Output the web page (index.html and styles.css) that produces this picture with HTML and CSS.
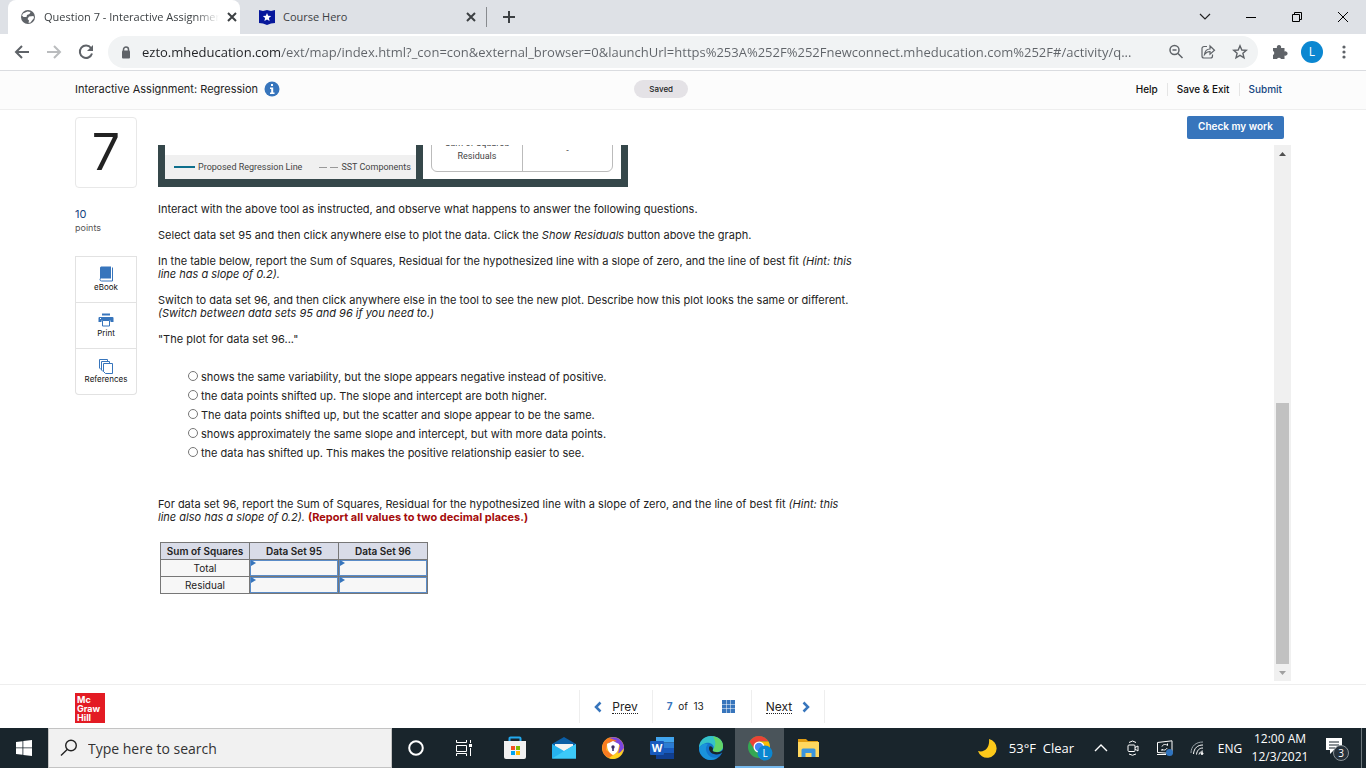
FILE: index.html
```
<!DOCTYPE html>
<html lang="en">
<head>
  <meta charset="UTF-8" />
  <meta name="viewport" content="width=device-width, initial-scale=1.0"/>
  <title>Question 7 - Interactive Assignment</title>
  <link rel="stylesheet" href="styles.css">
</head>
<body>

  <!-- Browser tabs -->
  <div class="tab-strip">
    <div class="tab tab-active">
      <svg class="tab-icon" width="16" height="16" viewBox="0 0 16 16"><circle cx="8" cy="8" r="7" fill="#5f6368"/><path d="M3 4.500 7.500 2.500 10.500 3 9.500 5 7 6 6.500 8H3.500L2 6.500zM9 7.500 13.500 7 14 9 12 11.500 10.500 13.500 8.500 14 9 11.500 7.500 10z" fill="#fff"/></svg>
      <span class="tab-title tab-title-fade">Question 7 - Interactive Assignment</span>
      <button class="tab-close" aria-label="Close tab"><svg width="10" height="10" viewBox="0 0 10 10"><path d="M1 1 9 9M9 1 1 9" stroke="#3c4043" stroke-width="2"/></svg></button>
    </div>
    <div class="tab tab-second">
      <svg class="tab-icon" width="16" height="16" viewBox="0 0 16 16"><path d="M0 1 4 2 8 1 12 2 16 1V14L12 14.500 8 16 4 14.500 0 14z" fill="#06179b"/><path d="M8 4 9.200 6.800 12.200 7 9.900 9 10.600 12 8 10.400 5.400 12 6.100 9 3.800 7 6.800 6.800z" fill="#fff"/></svg>
      <span class="tab-title">Course Hero</span>
      <button class="tab-close" aria-label="Close tab"><svg width="10" height="10" viewBox="0 0 10 10"><path d="M1 1 9 9M9 1 1 9" stroke="#3c4043" stroke-width="2"/></svg></button>
    </div>
    <button class="new-tab" aria-label="New tab"><svg width="12" height="12" viewBox="0 0 12 12"><path d="M6 0V12M0 6H12" stroke="#3c4043" stroke-width="2"/></svg></button>
    <div class="window-buttons">
      <button aria-label="Search tabs"><svg width="12" height="12" viewBox="0 0 12 12"><path d="M1 3 6 8 11 3" fill="none" stroke="#222" stroke-width="1.200"/></svg></button>
      <button aria-label="Minimize"><svg width="12" height="12" viewBox="0 0 12 12"><path d="M1 6.500H11" stroke="#000"/></svg></button>
      <button aria-label="Restore"><svg width="12" height="12" viewBox="0 0 12 12"><path d="M1.500 3.500H8.500V10.500H1.500zM3.500 3.500V1.500H10.500V8.500H8.500" fill="none" stroke="#000"/></svg></button>
      <button aria-label="Close"><svg width="12" height="12" viewBox="0 0 12 12"><path d="M1 1 11 11M11 1 1 11" stroke="#000"/></svg></button>
    </div>
  </div>

  <!-- Address bar -->
  <div class="toolbar">
    <div class="toolbar-start">
      <button aria-label="Back"><svg width="16" height="16" viewBox="0 0 16 16"><path d="M15 8H2M8 2 2 8 8 14" fill="none" stroke="#5f6368" stroke-width="2"/></svg></button>
      <button aria-label="Forward"><svg width="16" height="16" viewBox="0 0 16 16"><path d="M1 8H14M8 2 14 8 8 14" fill="none" stroke="#babcbe" stroke-width="2"/></svg></button>
      <button aria-label="Reload"><svg width="16" height="16" viewBox="0 0 16 16"><path d="M13 4A6.200 6.200 0 1 0 14 9.500" fill="none" stroke="#5f6368" stroke-width="2"/><path d="M15 1V7H9z" fill="#5f6368"/></svg></button>
    </div>
    <div class="address">
      <svg width="10" height="13" viewBox="0 0 10 13"><path d="M2.500 5V3.500a2.500 2.500 0 0 1 5 0V5" fill="none" stroke="#5f6368" stroke-width="1.500"/><rect x="1" y="4.500" width="8" height="8" rx="1" fill="#5f6368"/></svg>
      <input class="url" type="text" aria-label="Address" value="ezto.mheducation.com/ext/map/index.html?_con=con&amp;external_browser=0&amp;launchUrl=https%253A%252F%252Fnewconnect.mheducation.com%252F#/activity/q...">
      <button aria-label="Zoom"><svg width="16" height="16" viewBox="0 0 16 16"><circle cx="6.500" cy="6" r="4.500" fill="none" stroke="#5f6368" stroke-width="1.500"/><path d="M10 9.500 14.500 14M4.500 6H8.500" stroke="#5f6368" stroke-width="1.500"/></svg></button>
      <button aria-label="Share"><svg width="16" height="16" viewBox="0 0 16 16"><path d="M7 2.500H4a2 2 0 0 0-2 2V12a2 2 0 0 0 2 2H10.500a2 2 0 0 0 2-2V10.500" fill="none" stroke="#5f6368" stroke-width="1.200"/><path d="M4.500 10.500C5 6.500 7 5 10 5V2L14.500 6.200 10 10.200V7.500C7.500 7.500 6 8.500 4.500 10.500z" fill="none" stroke="#5f6368" stroke-width="1.200"/></svg></button>
      <button aria-label="Bookmark"><svg width="16" height="16" viewBox="0 0 16 16"><path d="M8 1.800 9.800 6 14.300 6.300 10.900 9.300 12 13.800 8 11.400 4 13.800 5.100 9.300 1.700 6.300 6.200 6z" fill="none" stroke="#5f6368" stroke-width="1.400"/></svg></button>
    </div>
    <div class="toolbar-end">
      <button aria-label="Extensions"><svg width="16" height="16" viewBox="0 0 16 16"><path d="M1 4H5a2.200 2.200 0 1 1 4 0h3.500v3.500a2.200 2.200 0 1 1 0 4V15H9a2.200 2.200 0 0 0-4 0H1V11a2.200 2.200 0 0 0 0-4z" fill="#5f6368"/></svg></button>
      <button><span class="avatar">L</span></button>
      <button aria-label="Menu"><svg width="4" height="14" viewBox="0 0 4 14" fill="#5f6368"><circle cx="2" cy="2" r="1.600"/><circle cx="2" cy="7" r="1.600"/><circle cx="2" cy="12" r="1.600"/></svg></button>
    </div>
  </div>

  <header class="app-header">
    <div class="assignment">
      <span>Interactive Assignment: Regression</span>
      <svg width="16" height="16" viewBox="0 0 16 16"><circle cx="8" cy="8" r="7.500" fill="#3775bc"/><path d="M7 3h2v2H7zM6 6.500h3.200v5H10.500V13H6v-1.500h1.200V8H6z" fill="#fff"/></svg>
    </div>
    <span class="saved">Saved</span>
    <nav class="app-links">
      <a href="#">Help</a>
      <a href="#">Save &amp; Exit</a>
      <a href="#" class="submit">Submit</a>
    </nav>
  </header>

  <main class="question-page">
    <aside class="sidebar">
      <div class="question-number">7</div>
      <div class="points"><span class="points-value">10</span>points</div>
      <div class="tools">
        <a href="#"><svg width="16" height="16" viewBox="0 0 16 16"><path d="M3 .5H13V12H3a1 1 0 0 0-1 1V1.500z" fill="#3775bc"/><path d="M13 12H3.500A1.200 1.200 0 0 0 3.500 15H14.500V1.500" fill="none" stroke="#3775bc"/></svg>eBook</a>
        <a href="#"><svg width="16" height="16" viewBox="0 0 16 16"><path d="M4 2.500H12" stroke="#3775bc" stroke-width="2"/><path d="M1.500 5H14.500a1 1 0 0 1 1 1V10H12.500V8.500H3.500V10H.5V6a1 1 0 0 1 1-1z" fill="#3775bc"/><path d="M4.500 8.500H11.500V14H4.500z" fill="#fff" stroke="#3775bc"/><path d="M2 6.500H3" stroke="#fff"/></svg>Print</a>
        <a href="#"><svg width="16" height="16" viewBox="0 0 16 16" fill="#fff" stroke="#3775bc"><path d="M1.500 1.500H9.500V11.500H3L1.500 10z"/><path d="M3.500 3.500H11.500V13.500H5L3.500 12z"/><path d="M5.500 5.500H14.500V15.500H7.500L5.500 13.500z"/></svg>References</a>
      </div>
    </aside>

    <div class="content">
      <div class="content-bar"><button class="check-work">Check my work</button></div>

      <div class="scroll-pane">
        <form class="question" action="#" method="post">
          <div class="plot">
            <div class="plot-graph">
              <div class="legend">
                <span class="legend-item"><i class="line-solid"></i>Proposed Regression Line</span>
                <span class="legend-item"><i class="line-dash"></i><i class="line-dash"></i>SST Components</span>
              </div>
            </div>
            <div class="plot-results">
              <div class="result-box">
                <span>Sum of Squared Residuals</span>
                <span class="result-value">-</span>
              </div>
            </div>
          </div>

          <p>Interact with the above tool as instructed, and observe what happens to answer the following questions.</p>
          <p>Select data set 95 and then click anywhere else to plot the data. Click the <em>Show Residuals</em> button above the graph.</p>
          <p>In the table below, report the Sum of Squares, Residual for the hypothesized line with a slope of zero, and the line of best fit <em>(Hint: this<br>line has a slope of 0.2).</em></p>
          <p>Switch to data set 96, and then click anywhere else in the tool to see the new plot. Describe how this plot looks the same or different.<br><em>(Switch between data sets 95 and 96 if you need to.)</em></p>
          <p>"The plot for data set 96..."</p>

          <div class="options">
            <label><input type="radio" name="answer" value="1">shows the same variability, but the slope appears negative instead of positive.</label>
            <label><input type="radio" name="answer" value="2">the data points shifted up. The slope and intercept are both higher.</label>
            <label><input type="radio" name="answer" value="3">The data points shifted up, but the scatter and slope appear to be the same.</label>
            <label><input type="radio" name="answer" value="4">shows approximately the same slope and intercept, but with more data points.</label>
            <label><input type="radio" name="answer" value="5">the data has shifted up. This makes the positive relationship easier to see.</label>
          </div>

          <p>For data set 96, report the Sum of Squares, Residual for the hypothesized line with a slope of zero, and the line of best fit <em>(Hint: this<br>line also has a slope of 0.2).</em> <strong>(Report all values to two decimal places.)</strong></p>

          <table class="answers">
            <thead>
              <tr><th>Sum of Squares</th><th>Data Set 95</th><th>Data Set 96</th></tr>
            </thead>
            <tbody>
              <tr>
                <td>Total</td>
                <td class="entry"><input type="text" name="total95" aria-label="Total, Data Set 95"></td>
                <td class="entry"><input type="text" name="total96" aria-label="Total, Data Set 96"></td>
              </tr>
              <tr>
                <td>Residual</td>
                <td class="entry"><input type="text" name="residual95" aria-label="Residual, Data Set 95"></td>
                <td class="entry"><input type="text" name="residual96" aria-label="Residual, Data Set 96"></td>
              </tr>
            </tbody>
          </table>
        </form>

        <div class="scrollbar">
          <button aria-label="Scroll up"><svg width="7" height="4" viewBox="0 0 7 4"><path d="M0 4 3.500 0 7 4z" fill="#505050"/></svg></button>
          <div class="track"><div class="thumb"></div></div>
          <button aria-label="Scroll down"><svg width="7" height="4" viewBox="0 0 7 4"><path d="M0 0 3.500 4 7 0z" fill="#a0a0a0"/></svg></button>
        </div>
      </div>
    </div>
  </main>

  <footer class="app-footer">
    <div class="brand">Mc<br>Graw<br>Hill</div>
    <nav class="pager">
      <div class="pager-item">
        <svg width="8" height="12" viewBox="0 0 8 12"><path d="M6.500 1.500 2 6 6.500 10.500" fill="none" stroke="#3775bc" stroke-width="2.500"/></svg>
        <a href="#">Prev</a>
      </div>
      <div class="pager-item pager-count">
        <span><b>7</b>&nbsp; of &nbsp;13</span>
        <svg width="13" height="13" viewBox="0 0 13 13" fill="#3775bc"><path d="M0 0h4v4H0zM4.500 0h4v4h-4zM9 0h4v4H9zM0 4.500h4v4H0zM4.500 4.500h4v4h-4zM9 4.500h4v4H9zM0 9h4v4H0zM4.500 9h4v4h-4zM9 9h4v4H9z"/></svg>
      </div>
      <div class="pager-item">
        <a href="#">Next</a>
        <svg width="8" height="12" viewBox="0 0 8 12"><path d="M1.500 1.500 6 6 1.500 10.500" fill="none" stroke="#3775bc" stroke-width="2.500"/></svg>
      </div>
    </nav>
  </footer>

  <!-- Windows taskbar -->
  <div class="taskbar">
    <button class="task" aria-label="Start"><svg width="16" height="16" viewBox="0 0 16 16" fill="#fff"><path d="M0 2 6.500 1.200V7.500H0zM7.300 1.100 16 0V7.500H7.300zM0 8.300H6.500V14.700L0 14zM7.300 8.300H16V16L7.300 14.900z"/></svg></button>
    <label class="search">
      <svg width="18" height="18" viewBox="0 0 18 18"><circle cx="11" cy="6.500" r="5.300" fill="none" stroke="#222" stroke-width="1.400"/><path d="M7.200 10.500 1 16.500" stroke="#222" stroke-width="1.400"/></svg>
      <input type="text" placeholder="Type here to search" aria-label="Search">
    </label>
    <button class="task" aria-label="Cortana"><svg width="18" height="18" viewBox="0 0 18 18"><circle cx="9" cy="9" r="6.800" fill="none" stroke="#fff" stroke-width="2"/></svg></button>
    <button class="task" aria-label="Task view"><svg width="16" height="16" viewBox="0 0 16 16" fill="none" stroke="#fff"><path d="M.5 0V2.500H10.500V0M.5 5.500H10.500V11.500H.5zM.5 16V13.500H10.500V16M14.500 0V3M14.500 8V16"/><path d="M13 4H16V7H13z" fill="#fff" stroke="none"/></svg></button>
    <div class="apps">
      <button class="app" aria-label="Store"><svg width="24" height="24" viewBox="0 0 24 24"><path d="M6.500 6V2.500a1 1 0 0 1 1-1H16.500a1 1 0 0 1 1 1V6" fill="none" stroke="#22a9ee" stroke-width="2"/><path d="M1 5H23V21a2 2 0 0 1-2 2H3a2 2 0 0 1-2-2z" fill="#f2f1f1"/><path d="M8 10h4v4H8z" fill="#f25022"/><path d="M13 10h4v4h-4z" fill="#7fba00"/><path d="M8 15h4v4H8z" fill="#00a4ef"/><path d="M13 15h4v4h-4z" fill="#ffb900"/></svg></button>
      <button class="app" aria-label="Mail"><svg width="24" height="24" viewBox="0 0 24 24"><path d="M0 8 12 1 24 8V15H0z" fill="#0b5ea6"/><path d="M3 8H21V15L12 18 3 15z" fill="#f3f3f3"/><path d="M0 8 12 15 24 8V22.500H0z" fill="#26b3ef"/><path d="M0 22.500 24 8V22.500z" fill="#3cc9f8"/></svg></button>
      <button class="app" aria-label="Secure browser"><svg width="24" height="24" viewBox="0 0 24 24"><circle cx="12" cy="12" r="11" fill="#fbb829"/><path d="M8 2A11 11 0 0 1 23 12C23 17 20 19 17 18L19 9 8 7z" fill="#7c46e0"/><path d="M8 1.800A11 11 0 0 0 8 22L12 19 5 14 6 7 16 5z" fill="#f77b22"/><path d="M23 12C22 20 14 25 8 22L15 18C20 17 21 14 23 12z" fill="#ffd21c"/><path d="M12 5 18 8C18 14 16 17 12 19 8 17 6 14 6 8z" fill="#fff"/><circle cx="12" cy="11" r="1.700" fill="#3c2c66"/><path d="M11.200 11H12.800V15H11.200z" fill="#3c2c66"/></svg></button>
      <button class="app" aria-label="Word"><svg width="24" height="24" viewBox="0 0 24 24"><path d="M6 1H24V6.500H6z" fill="#41a5ee"/><path d="M6 6.500H24V12H6z" fill="#2b7cd3"/><path d="M6 12H24V17.500H6z" fill="#185abd"/><path d="M6 17.500H24V23H6z" fill="#103f91"/><rect x="0" y="5" width="14" height="14" rx="1" fill="#185abd"/><text x="7" y="16" text-anchor="middle" class="word-letter">W</text></svg></button>
      <button class="app" aria-label="Edge"><svg width="24" height="24" viewBox="0 0 24 24"><circle cx="12" cy="12" r="12" fill="#1375cd"/><path d="M0 12C0 5 5 0 12 0 19 0 24 4 24 10 24 14 21 16 17 16 14 16 13 15 14.500 13 16 9 11 6 7 7 3 8 1 10 0 12z" fill="#35c3c8"/><path d="M14 .2C20 1 24 5 24 10 24 14 21 16 17 16 14 16 13 15 14.500 13 16 10 18 7 14 .2z" fill="#62d568"/><path d="M0 12C2 8 6 7 9 8 7 10 6 13 8 17 10 21 15 23 19 21 15 25 7 25 3 20 1 18 0 15 0 12z" fill="#1a93dc"/><path d="M10.500 10.500C9 13 11 18 17 18.500 20 18.700 22 17.500 23.500 16 24 17 23 19 22 20L24 21V14C22 16 19 16.500 17 16 14 16 13 15 14 13 14 11 11.500 9.500 10.500 10.500z" fill="#19252c"/></svg></button>
      <button class="app app-active" aria-label="Chrome"><svg width="28" height="26" viewBox="0 0 28 26"><circle cx="13" cy="12" r="11" fill="#34a853"/><path d="M3.500 6.500A11 11 0 0 1 22.500 6.500H13L8.500 14.500z" fill="#ea4335"/><path d="M22.500 6.500A11 11 0 0 1 13 23L17.500 14.500 13 6.500z" fill="#fbbc04"/><circle cx="13" cy="12" r="5.500" fill="#fff"/><circle cx="13" cy="12" r="4.200" fill="#4285f4"/><circle cx="19" cy="18" r="7.500" fill="#0b87d1"/><text x="19" y="22" text-anchor="middle" class="badge-letter">L</text></svg></button>
      <button class="app" aria-label="File Explorer"><svg width="24" height="24" viewBox="0 0 24 24"><path d="M1 3H9L11 5H21V8H1z" fill="#e19d12"/><path d="M1 6H22V21H1z" fill="#ffd75e"/><path d="M4.500 21V14a1.500 1.500 0 0 1 1.500-1.500H17A1.500 1.500 0 0 1 18.500 14V21H14.500V17H8.500V21z" fill="#3a95dd"/></svg></button>
    </div>

    <div class="tray">
      <button class="weather"><svg width="20" height="20" viewBox="0 0 20 20"><path d="M12 1A9.500 9.500 0 1 1 1 13C8 15 13 9 12 1z" fill="#fdc91a"/></svg><span>53°F&nbsp; Clear</span></button>
      <button class="tray-icon" aria-label="Hidden icons"><svg width="14" height="14" viewBox="0 0 14 14"><path d="M1 10 7 4 13 10" fill="none" stroke="#fff" stroke-width="1.400"/></svg></button>
      <button class="tray-icon" aria-label="Meet now"><svg width="16" height="16" viewBox="0 0 16 16" fill="none" stroke="#fff"><rect x="3" y="5" width="7" height="6.500" rx="1"/><path d="M10 7.500 13 6V11L10 9M4 2.500Q7.500-.5 11 2.500M4 14Q7.500 16.500 11 14"/></svg></button>
      <button class="tray-icon" aria-label="Update"><svg width="18" height="16" viewBox="0 0 18 16" fill="none" stroke="#fff"><path d="M1.500 2.500 16 .800V13.500L1.500 12.500zM1 14.500H10"/><path d="M6 6.500C7 4 10 4 11.500 5.500V3.500M11 8C10 10.500 7 10.500 6 9V11"/><circle cx="13.500" cy="12.500" r="3.500" fill="#2f74c0" stroke="none"/></svg></button>
      <button class="tray-icon" aria-label="Network"><svg width="16" height="16" viewBox="0 0 16 16" fill="none" stroke="#fff"><path d="M2 13C2 6 7 2 14 2" stroke="#9aa3a8"/><path d="M4.500 14C5 8 8.500 5 14 5M7.500 14.500C8 10.500 10 8 14 8M10 14.500C10.500 12.500 12 11 14 11"/><circle cx="13" cy="13.500" r="1" fill="#fff"/></svg></button>
      <button class="language">ENG</button>
      <button class="clock">12:00 AM<br>12/3/2021</button>
      <button class="notifications" aria-label="3 notifications"><svg width="28" height="28" viewBox="0 0 28 28"><path d="M3 4H19V16H11L7 20V16H3z" fill="#fff"/><path d="M6 8H16M6 11H16M6 14H12" stroke="#19252c" stroke-width="1.200"/><circle cx="18" cy="19" r="7.500" fill="#26313a" stroke="#8b9398"/><text x="18" y="23" text-anchor="middle" class="badge-letter">3</text></svg></button>
    </div>
  </div>

</body>
</html>
```
FILE: styles.css
```
* {
  box-sizing: border-box;
}

body {
  margin: 0;
  min-height: 100vh;
  display: flex;
  flex-direction: column;
  font-family: Inter, "Liberation Sans", sans-serif;
  font-size: 11px;
  line-height: 13px;
  color: #222;
  background: #fff;
}

button {
  display: flex;
  align-items: center;
  justify-content: center;
  padding: 0;
  border: none;
  background: none;
  color: inherit;
  font: inherit;
  cursor: pointer;
}

a {
  color: inherit;
  text-decoration: none;
}

svg {
  flex: none;
}

/* browser */
.tab-strip {
  display: flex;
  align-items: center;
  height: 34px;
  padding-left: 8px;
  background: #dee1e6;
  font-family: "Open Sans", "Noto Sans", sans-serif;
  font-size: 11px;
  line-height: 16px;
  color: #3c4043;
}

.tab {
  display: flex;
  align-items: center;
  height: 34px;
  width: 232px;
  padding: 0 3px 0 12px;
  gap: 8px;
}

.tab-active {
  background: #fff;
  border-radius: 8px 8px 0 0;
}

.tab-second {
  width: 247px;
  height: 20px;
  padding: 0 10px 0 19px;
  border-right: 1px solid #888b8f;
}

.tab-title {
  flex: 1;
  overflow: hidden;
  white-space: nowrap;
}

.tab-title-fade {
  mask-image: linear-gradient(to right, #000 86%, transparent);
}

.new-tab {
  width: 44px;
  height: 34px;
}

.window-buttons {
  display: flex;
  margin-left: auto;
}

.window-buttons button {
  width: 46px;
  height: 28px;
}

.toolbar {
  display: flex;
  align-items: center;
  height: 37px;
  padding: 0 10px 0 14px;
  gap: 10px;
  border-bottom: 1px solid #dadce0;
  font-family: "Open Sans", "Noto Sans", sans-serif;
}

.toolbar-start {
  display: flex;
  gap: 16px;
  padding-right: 4px;
}

.toolbar-end {
  display: flex;
  gap: 8px;
}

.toolbar-end button {
  width: 24px;
  height: 24px;
}

.address {
  flex: 1;
  display: flex;
  align-items: center;
  gap: 16px;
  height: 32px;
  padding: 0 10px 0 13px;
  border-radius: 16px;
  background: #f1f3f4;
}

.url {
  flex: 1;
  min-width: 0;
  margin-left: -5px;
  padding: 0;
  border: none;
  outline: none;
  font-family: inherit;
  font-size: 13px;
  color: transparent;
  background: linear-gradient(to right, #202124 140px, #5f6368 140px);
  background-clip: text;
}

.avatar {
  width: 22px;
  border-radius: 50%;
  background: #0b87d1;
  color: #fff;
  font-size: 12px;
  line-height: 22px;
}

/* assignment header */
.app-header {
  display: flex;
  align-items: center;
  height: 39px;
  padding: 0 75px 2px;
  border-bottom: 1px solid #eee;
  background: #fcfcfc;
}

.assignment {
  flex: 0 0 46%;
  display: flex;
  align-items: center;
  gap: 6px;
}

.saved {
  padding: 3px 15px 2px;
  border-radius: 9px;
  background: #e4e2e6;
  font-size: 8px;
  font-weight: 500;
}

.app-links {
  display: flex;
  margin-left: auto;
  font-size: 10px;
  font-weight: 500;
  color: #111;
}

.app-links a {
  padding: 0 9px;
  border-left: 1px solid #e5e5e5;
}

.app-links a:first-child {
  border-left: none;
}

.app-links .submit {
  color: #14457f;
}

/* question */
.question-page {
  flex: 1;
  display: flex;
  gap: 21px;
  padding: 0 75px 3px;
}

.sidebar {
  flex: 0 0 62px;
  padding-top: 7px;
}

.question-number {
  display: flex;
  align-items: center;
  justify-content: center;
  height: 71px;
  border: 1px solid #e8e8e8;
  border-radius: 4px;
  font-size: 50px;
}

.points {
  display: flex;
  flex-direction: column;
  margin: 20px 0 22px;
  font-size: 9px;
  color: #555;
}

.points-value {
  font-size: 11px;
  color: #14457f;
}

.tools {
  border: 1px solid #e2e2e2;
  border-top: none;
  border-radius: 0 0 4px 4px;
}

.tools a {
  display: flex;
  flex-direction: column;
  align-items: center;
  height: 46px;
  padding-top: 9px;
  border-top: 1px solid #e2e2e2;
  font-size: 8px;
  line-height: 10px;
  color: #111;
}

.content {
  flex: 1;
  display: flex;
  flex-direction: column;
}

.content-bar {
  display: flex;
  justify-content: flex-end;
  height: 35px;
  padding: 6px 7px 0 0;
}

.check-work {
  width: 97px;
  height: 23px;
  padding-bottom: 2px;
  border-radius: 2px;
  background: #3775bc;
  color: #fff;
  font-size: 10px;
  font-weight: 600;
}

.scroll-pane {
  flex: 1;
  display: flex;
  justify-content: space-between;
}

.plot {
  display: flex;
  gap: 7px;
  width: 470px;
  height: 42px;
  margin-bottom: 16px;
  padding: 0 7px 8px;
  background: #35474a;
  font-family: Roboto, "Noto Sans", sans-serif;
  font-size: 9px;
  line-height: 13px;
  color: #444;
}

.plot-graph {
  flex: 0 0 251px;
  display: flex;
  flex-direction: column;
  justify-content: flex-end;
  background: #fff;
}

.legend {
  display: flex;
  align-items: center;
  gap: 17px;
  height: 24px;
  padding-left: 9px;
  background: #f0f0f0;
  white-space: nowrap;
}

.legend-item {
  display: flex;
  align-items: center;
  gap: 3px;
}

.line-solid {
  width: 21px;
  height: 2px;
  background: #0e6f8c;
}

.line-dash {
  width: 8px;
  height: 1px;
  background: #999;
}

.plot-results {
  flex: 1;
  display: flex;
  align-items: flex-end;
  overflow: hidden;
  padding: 0 8px 7px;
  background: #fff;
}

.result-box {
  flex: 1;
  display: grid;
  grid-template-columns: 1fr 1fr;
  height: 44px;
  border: 1px solid #bbb;
  border-radius: 0 0 6px 6px;
  text-align: center;
}

.result-box span {
  display: flex;
  align-items: center;
  padding: 0 8px;
}

.result-box .result-value {
  justify-content: center;
  border-left: 1px solid #bbb;
}

.question p {
  margin: 0 0 13px;
}

.question strong {
  color: #a50b0b;
}

.options {
  display: flex;
  flex-direction: column;
  margin: 22px 0 35px 30px;
}

.options label {
  display: flex;
  align-items: center;
  gap: 3px;
  height: 19px;
}

.options input {
  width: 10px;
  height: 10px;
  margin: 0 0 4px;
}

.answers {
  margin: 18px 0 0 2px;
  border-collapse: collapse;
  font-size: 10px;
  line-height: 12px;
  text-align: center;
}

.answers th,
.answers td {
  width: 89px;
  height: 17px;
  padding: 0;
  border: 1px solid #777;
  background: #f7f7f7;
}

.answers th {
  background: #d9dce8;
  font-weight: 600;
}

.answers .entry {
  position: relative;
}

.answers .entry::before {
  content: "";
  position: absolute;
  left: 1px;
  top: 0;
  border: 3px solid transparent;
  border-left: 5px solid #3775bc;
  border-right: none;
}

.answers input {
  display: block;
  width: 100%;
  height: 16px;
  padding: 0 6px;
  border: 1px solid #5a8cc8;
  background: transparent;
  font: inherit;
}

.scrollbar {
  flex: 0 0 17px;
  display: flex;
  flex-direction: column;
  background: #f0f0f0;
}

.scrollbar button {
  height: 17px;
}

.track {
  flex: 1;
  display: flex;
  align-items: flex-end;
}

.thumb {
  flex: 1;
  height: 52%;
  margin: 0 2px;
  background: #c1c1c1;
}

/* footer */
.app-footer {
  display: flex;
  align-items: center;
  height: 44px;
  padding: 0 75px;
  border-top: 1px solid #eee;
}

.brand {
  width: 30px;
  height: 30px;
  padding: 2px;
  margin-top: 3px;
  background: #e31b23;
  color: #fff;
  font-family: Inter, sans-serif;
  font-size: 9px;
  font-weight: 700;
  line-height: 9px;
}

.pager {
  display: flex;
  margin-left: 39%;
  border-right: 1px solid #eee;
  font-size: 12px;
}

.pager-item {
  display: flex;
  align-items: center;
  gap: 10px;
  height: 33px;
  padding: 0 14px;
  border-left: 1px solid #eee;
}

.pager-item a {
  border-bottom: 1px dotted #222;
}

.pager-count {
  gap: 18px;
  padding-right: 16px;
  font-size: 10px;
}

.pager b {
  color: #3775bc;
}

/* taskbar */
.taskbar {
  display: flex;
  height: 40px;
  background: #19252c;
  font-family: "Open Sans", "Noto Sans", sans-serif;
  color: #fff;
}

.task {
  width: 48px;
}

.search {
  flex: 0 0 344px;
  display: flex;
  align-items: center;
  gap: 10px;
  padding-left: 11px;
  border: 1px solid #c3c3c3;
  background: #f1f1f1;
}

.search input {
  flex: 1;
  min-width: 0;
  padding: 0;
  border: none;
  outline: none;
  background: none;
  font-family: inherit;
  font-size: 14px;
}

.search input::placeholder {
  color: #333;
}

.apps {
  display: flex;
  padding-left: 2px;
}

.app {
  width: 49px;
}

.app-active {
  background: #4a545a;
  box-shadow: inset 0 -2px #76b9ed;
}

.word-letter {
  font-size: 11px;
  font-weight: 700;
  fill: #fff;
}

.badge-letter {
  font-size: 10px;
  fill: #fff;
}

.tray {
  display: flex;
  margin: 0 4px 0 auto;
  border-right: 1px solid #6d777c;
}

.weather {
  gap: 12px;
  padding-right: 11px;
  font-size: 13px;
}

.tray-icon {
  width: 32px;
}

.language {
  width: 34px;
  font-size: 12px;
}

.clock {
  width: 66px;
  font-size: 12px;
  line-height: 18px;
}

.notifications {
  width: 48px;
}
```
